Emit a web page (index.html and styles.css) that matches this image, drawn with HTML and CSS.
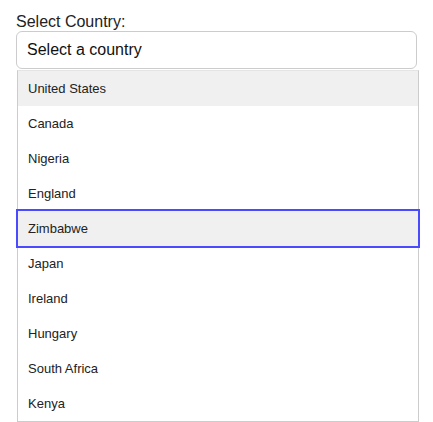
FILE: index.html
```html
<!DOCTYPE html>
<html>
<head>
<meta charset="utf-8">
<link rel="stylesheet" href="styles.css">
</head>
<body>
<div class="picker">
  <label class="picker-label">Select Country:</label>
  <div class="picker-input">Select a country</div>
  <ul class="picker-list">
    <li class="picker-item is-hover">United States</li>
    <li class="picker-item">Canada</li>
    <li class="picker-item">Nigeria</li>
    <li class="picker-item">England</li>
    <li class="picker-item is-focus">Zimbabwe</li>
    <li class="picker-item">Japan</li>
    <li class="picker-item">Ireland</li>
    <li class="picker-item">Hungary</li>
    <li class="picker-item">South Africa</li>
    <li class="picker-item">Kenya</li>
  </ul>
</div>
</body>
</html>
```

FILE: styles.css
```css
html, body {
  margin: 0;
  background: #ffffff;
}
body {
  padding: 8px;
  font-family: "Liberation Sans", Arial, sans-serif;
  color: #222222;
}
.picker {
  padding: 4px 8px 0 8px;
}
.picker-label {
  display: block;
  font-size: 16px;
  line-height: 19px;
  color: #222222;
}
.picker-input {
  box-sizing: border-box;
  height: 38px;
  line-height: 36px;
  padding: 0 10px;
  border: 1px solid #cccccc;
  border-radius: 6px;
  font-size: 16px;
  color: #111111;
}
.picker-list {
  list-style: none;
  margin: 1px 0 0 1px;
  padding: 0;
  width: calc(100% + 1px);
  box-sizing: border-box;
  border: 1px solid #cccccc;
  border-top-color: #e4e4e4;
}
.picker-item {
  padding: 10px 10px;
  font-size: 13px;
  line-height: 15px;
  color: #222222;
}
.picker-item.is-hover {
  background: #f0f0f0;
}
.picker-item.is-focus {
  background: #f0f0f0;
  outline: 2px solid #4a4aff;
}
```
